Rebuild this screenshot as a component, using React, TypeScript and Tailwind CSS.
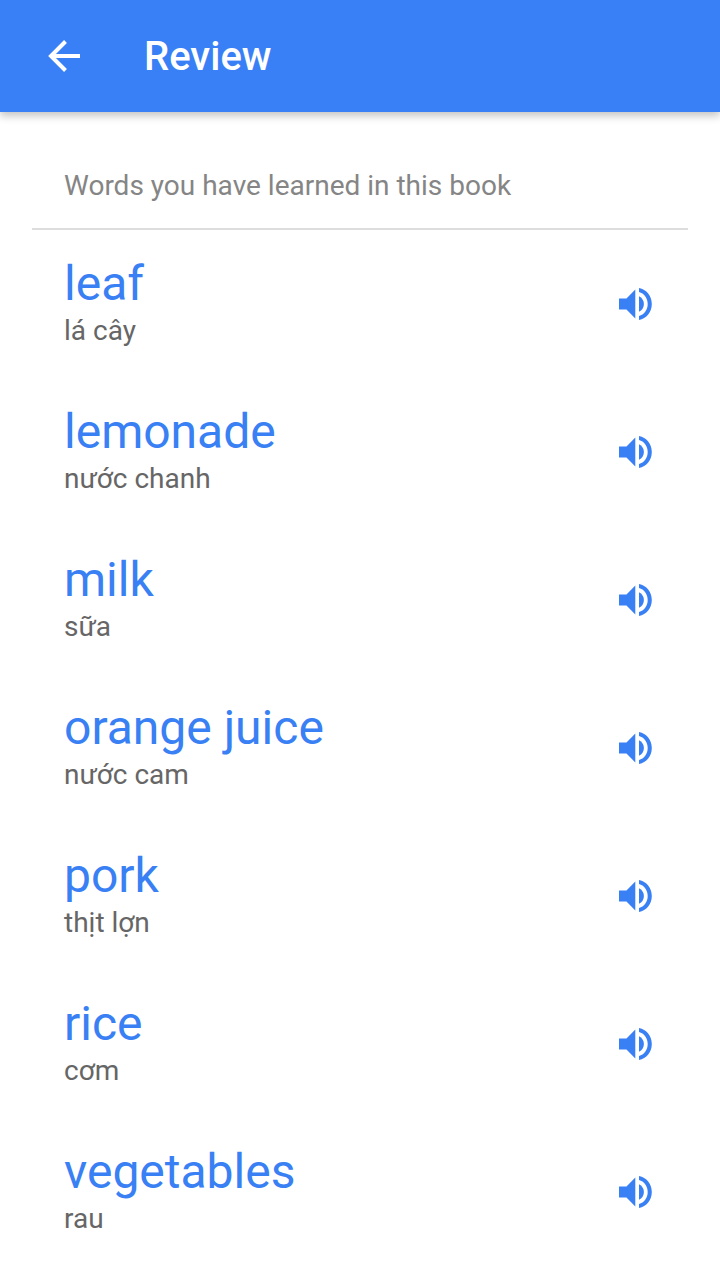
import React from "react";

type Word = { term: string; meaning: string };

const words: Word[] = [
  { term: "leaf", meaning: "lá cây" },
  { term: "lemonade", meaning: "nước chanh" },
  { term: "milk", meaning: "sữa" },
  { term: "orange juice", meaning: "nước cam" },
  { term: "pork", meaning: "thịt lợn" },
  { term: "rice", meaning: "cơm" },
  { term: "vegetables", meaning: "rau" },
];

function BackIcon() {
  return (
    <svg viewBox="0 0 48 48" className="size-12" fill="none" stroke="currentColor" strokeWidth="4" aria-hidden="true">
      <path d="M40 24H11M25.500 9.500L11 24l14.500 14.500" />
    </svg>
  );
}

function SpeakerIcon() {
  return (
    <svg viewBox="0 0 34 34" className="size-[34px]" fill="currentColor" aria-hidden="true">
      <path d="M0 11.500v11h7.500L16.300 31.500V2.500L7.500 11.500z" />
      <path d="M20 9.200v15.600c3-1.400 4.900-4.400 4.900-7.800s-1.900-6.400-4.900-7.800z" />
      <path d="M20 1v4c5 1.300 8.700 6 8.700 12S25 27.700 20 29v4c7.500-1.200 12.800-8 12.800-16S27.500 2.200 20 1z" />
    </svg>
  );
}

function WordRow({ term, meaning }: Word) {
  return (
    <li className="flex h-37 items-center justify-between pr-[35px] pl-8">
      <div className="pb-[2px]">
        <h2 className="text-[48px] leading-[56px] text-[#3980f4]">{term}</h2>
        <p className="text-[28px] leading-[38px] text-[#666666]">{meaning}</p>
      </div>
      <button type="button" aria-label={`Play ${term}`} className="text-[#3980f4]">
        <SpeakerIcon />
      </button>
    </li>
  );
}

export default function App() {
  return (
    <div className="min-h-screen bg-white font-[Roboto,sans-serif]">
      <header className="flex h-28 items-center gap-14 bg-[#3980f6] px-10 text-white shadow-[0_4px_8px_rgba(0,0,0,0.23)]">
        <button type="button" aria-label="Back">
          <BackIcon />
        </button>
        <h1 className="pt-[2px] text-[40px] leading-[48px] font-medium">Review</h1>
      </header>
      <main className="px-8 pt-14">
        <p className="border-b-2 border-[#dddddd] px-8 pb-6 text-[28px] leading-[36px] text-[#858585]">
          Words you have learned in this book
        </p>
        <ul>
          {words.map((word) => (
            <WordRow key={word.term} {...word} />
          ))}
        </ul>
      </main>
    </div>
  );
}
